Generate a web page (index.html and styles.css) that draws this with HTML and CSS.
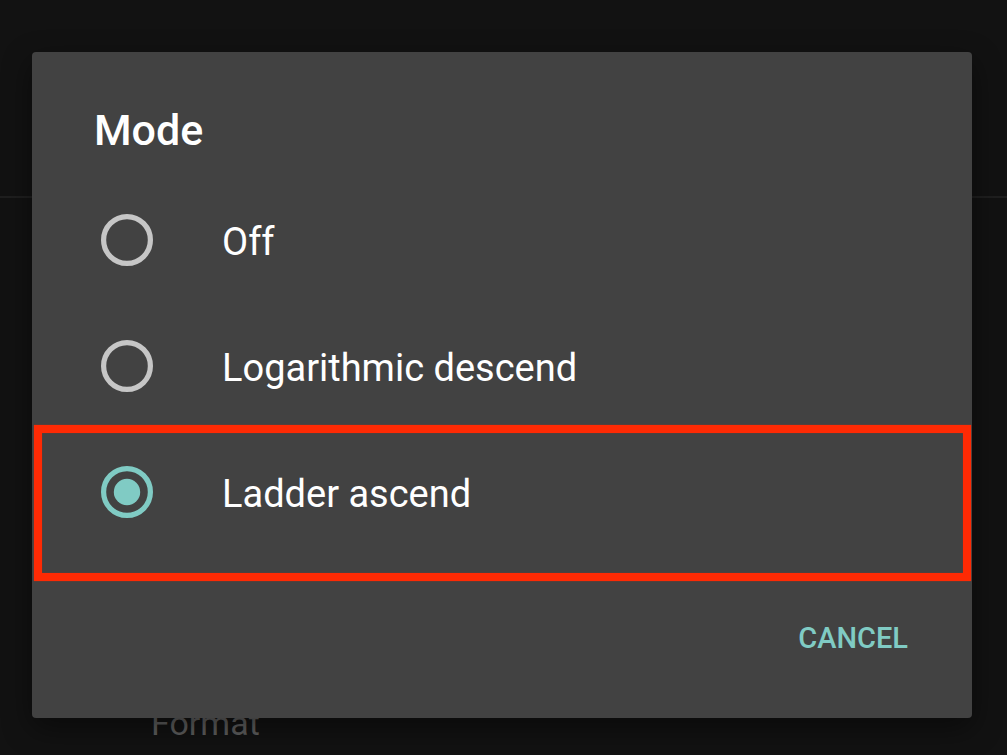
FILE: index.html
```html
<!DOCTYPE html>
<html lang="en">
<head>
<meta charset="utf-8">
<title>Mode</title>
<link rel="stylesheet" href="styles.css">
</head>
<body>
<div class="screen">
  <div class="appbar"></div>
  <div class="settings">
    <div class="setting-item">Format</div>
  </div>

  <div class="dialog">
    <div class="dialog-title">Mode</div>
    <div class="options">
      <div class="option">
        <svg class="radio" viewBox="0 0 52 52"><circle cx="26" cy="26" r="23.4" fill="none" stroke="#c6c6c6" stroke-width="5.2"/></svg>
        <span class="label">Off</span>
      </div>
      <div class="option">
        <svg class="radio" viewBox="0 0 52 52"><circle cx="26" cy="26" r="23.4" fill="none" stroke="#c6c6c6" stroke-width="5.2"/></svg>
        <span class="label">Logarithmic descend</span>
      </div>
      <div class="option">
        <svg class="radio" viewBox="0 0 52 52"><circle cx="26" cy="26" r="23.4" fill="none" stroke="#80cbc4" stroke-width="5.2"/><circle cx="26" cy="26" r="13.2" fill="#80cbc4"/></svg>
        <span class="label">Ladder ascend</span>
      </div>
    </div>
    <div class="actions">
      <span class="btn">CANCEL</span>
    </div>
    <div class="highlight"></div>
  </div>
</div>
</body>
</html>
```

FILE: styles.css
```css
html, body {
  margin: 0;
  padding: 0;
}
body {
  background: #121212;
  font-family: Roboto, "Noto Sans", "Liberation Sans", sans-serif;
  width: 1007px;
  height: 755px;
  overflow: hidden;
}
.screen {
  position: relative;
  width: 1007px;
  height: 755px;
}
.appbar {
  height: 196px;
  border-bottom: 2px solid #1f1f1f;
}
.settings {
  padding-top: 505px;
  padding-left: 151px;
}
.setting-item {
  font-size: 34px;
  line-height: 40px;
  color: #5e5e5e;
}
.dialog {
  position: absolute;
  left: 32px;
  top: 52px;
  width: 940px;
  height: 666px;
  background: #424242;
  border-radius: 4px;
  box-shadow: 0 10px 30px rgba(0, 0, 0, 0.45);
  display: flex;
  flex-direction: column;
  box-sizing: border-box;
}
.dialog-title {
  padding: 52px 0 0 62px;
  font-size: 43px;
  line-height: 52px;
  font-weight: 500;
  color: #ffffff;
}
.options {
  margin-top: 21px;
  display: flex;
  flex-direction: column;
}
.option {
  height: 126px;
  display: flex;
  align-items: center;
  padding-left: 69px;
}
.radio {
  width: 52px;
  height: 52px;
  flex: none;
}
.label {
  margin-left: 69px;
  padding-top: 3px;
  font-size: 38px;
  color: #ffffff;
}
.actions {
  margin-top: auto;
  display: flex;
  justify-content: flex-end;
  padding: 0 64px 63px 0;
}
.btn {
  font-size: 29px;
  line-height: 34px;
  font-weight: 500;
  color: #80cbc4;
}
.highlight {
  position: absolute;
  left: 2px;
  top: 373px;
  width: 937px;
  height: 156px;
  box-sizing: border-box;
  border: 8.5px solid #fe2a04;
  box-shadow: 0 0 1px rgba(254, 42, 4, 0.7), inset 0 0 1px rgba(254, 42, 4, 0.7);
}
```
